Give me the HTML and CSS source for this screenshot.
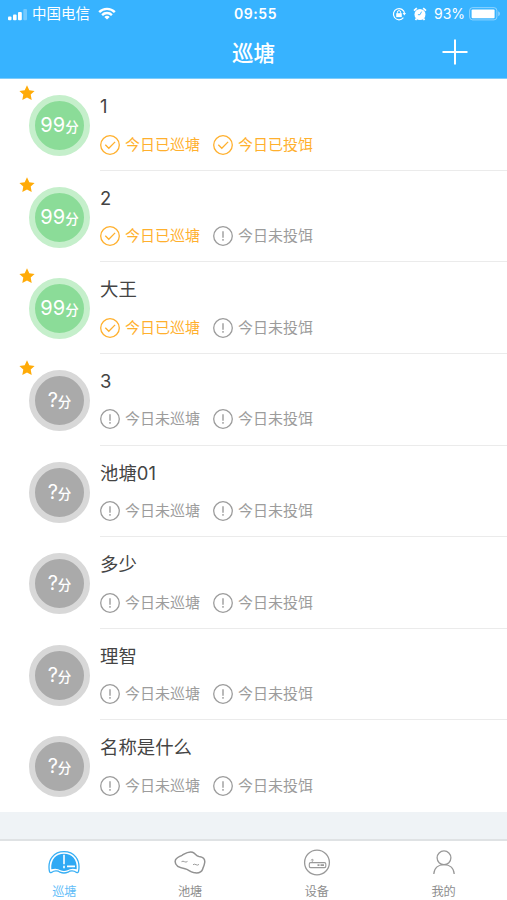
FILE: index.html
```html
<!DOCTYPE html>
<html lang="zh-CN">
<head>
<meta charset="utf-8">
<title>巡塘</title>
<link rel="stylesheet" href="styles.css">
</head>
<body>
<svg class="defs" aria-hidden="true">
  <symbol id="star" viewBox="0 0 16 16"><path d="M8 .3l2.3 4.9 5.3.7-3.9 3.7 1 5.4L8 12.4 3.3 15l1-5.4L.4 5.9l5.3-.7z" fill="#ffab08"/></symbol>
  <symbol id="ok" viewBox="0 0 20 20"><circle cx="10" cy="10" r="9.3"/><path d="M5.3 9.8l3.5 3.5 6.3-6.4"/></symbol>
  <symbol id="warn" viewBox="0 0 20 20"><circle cx="10" cy="10" r="9.3"/><path d="M10 5.2v6.500M10 13v1.700" stroke-width="1.400"/></symbol>
</svg>
<div class="app">
  <header class="header">
    <div class="statusbar">
      <div class="carrier">
        <svg class="signal" viewBox="0 0 20 12" fill="#fff"><rect x="0" y="7.5" width="3.5" height="3.8" rx="1"/><rect x="5" y="5.5" width="3.6" height="5.8" rx="1"/><rect x="10" y="3" width="3.8" height="8.3" rx="1"/><rect x="15.3" y="0" width="3.7" height="11.3" rx="1" opacity=".3"/></svg>
        <span class="carrier-name">中国电信</span>
        <svg class="wifi" viewBox="0 0 18 13" fill="none" stroke="#fff" stroke-width="2.4"><path d="M1.2 5.1a11 11 0 0 1 15.6 0M4.1 8.1a6.9 6.9 0 0 1 9.8 0"/><path d="M9 12.6L6.3 10a3.8 3.8 0 0 1 5.4 0z" fill="#fff" stroke="none"/></svg>
      </div>
      <div class="clock">09:55</div>
      <div class="power">
        <svg class="lock" viewBox="0 0 14 14" fill="none" stroke="#fff"><path d="M11.4 10.7A5.6 5.6 0 1 1 12.6 6.5" stroke-width="1.2"/><path d="M10.6 6h3.4l-1.7 2.4z" fill="#fff" stroke="none"/><rect x="4.2" y="6.2" width="5.6" height="3.9" fill="#fff" stroke="none"/><path d="M5.4 6.5V5.2a1.6 1.6 0 0 1 3.2 0v1.3"/></svg>
        <svg class="alarm" viewBox="0 0 14 14"><circle cx="7" cy="7.5" r="5.5" fill="#fff"/><path d="M1 3.7L3.8 1.2M13 3.7L10.2 1.2M3.6 11.4L2.5 13M10.4 11.4l1.1 1.6" stroke="#fff" stroke-width="1.7"/><path d="M8.6 4.6L7 7.7H4.9" fill="none" stroke="#37b3ff" stroke-width=".9"/></svg>
        <span class="percent">93%</span>
        <svg class="battery" viewBox="0 0 32 14"><rect x=".6" y=".6" width="27.3" height="12.3" rx="3" fill="none" stroke="#fff" opacity=".42"/><rect x="2.6" y="2.4" width="23" height="8.8" rx="1" fill="#fff"/><path d="M29.3 4.3c2 .8 2 4.2 0 5z" fill="#fff" opacity=".5"/></svg>
      </div>
    </div>
    <div class="navbar">
      <h1 class="nav-title">巡塘</h1>
      <svg class="add" viewBox="0 0 26 26" stroke="#fff" stroke-width="2"><path d="M13 .5v25M.5 13h25"/></svg>
    </div>
  </header>

  <main class="list">
    <section class="row">
      <div class="side"><div class="score good"><b>99</b><i>分</i></div><svg class="star"><use href="#star"/></svg></div>
      <div class="info"><h2>1</h2><div class="states"><span class="state done"><svg><use href="#ok"/></svg>今日已巡塘</span><span class="state done"><svg><use href="#ok"/></svg>今日已投饵</span></div></div>
    </section>
    <section class="row">
      <div class="side"><div class="score good"><b>99</b><i>分</i></div><svg class="star"><use href="#star"/></svg></div>
      <div class="info"><h2>2</h2><div class="states"><span class="state done"><svg><use href="#ok"/></svg>今日已巡塘</span><span class="state"><svg><use href="#warn"/></svg>今日未投饵</span></div></div>
    </section>
    <section class="row">
      <div class="side"><div class="score good"><b>99</b><i>分</i></div><svg class="star"><use href="#star"/></svg></div>
      <div class="info"><h2>大王</h2><div class="states"><span class="state done"><svg><use href="#ok"/></svg>今日已巡塘</span><span class="state"><svg><use href="#warn"/></svg>今日未投饵</span></div></div>
    </section>
    <section class="row">
      <div class="side"><div class="score"><b>?</b><i>分</i></div><svg class="star"><use href="#star"/></svg></div>
      <div class="info"><h2>3</h2><div class="states"><span class="state"><svg><use href="#warn"/></svg>今日未巡塘</span><span class="state"><svg><use href="#warn"/></svg>今日未投饵</span></div></div>
    </section>
    <section class="row">
      <div class="side"><div class="score"><b>?</b><i>分</i></div></div>
      <div class="info"><h2>池塘01</h2><div class="states"><span class="state"><svg><use href="#warn"/></svg>今日未巡塘</span><span class="state"><svg><use href="#warn"/></svg>今日未投饵</span></div></div>
    </section>
    <section class="row">
      <div class="side"><div class="score"><b>?</b><i>分</i></div></div>
      <div class="info"><h2>多少</h2><div class="states"><span class="state"><svg><use href="#warn"/></svg>今日未巡塘</span><span class="state"><svg><use href="#warn"/></svg>今日未投饵</span></div></div>
    </section>
    <section class="row">
      <div class="side"><div class="score"><b>?</b><i>分</i></div></div>
      <div class="info"><h2>理智</h2><div class="states"><span class="state"><svg><use href="#warn"/></svg>今日未巡塘</span><span class="state"><svg><use href="#warn"/></svg>今日未投饵</span></div></div>
    </section>
    <section class="row">
      <div class="side"><div class="score"><b>?</b><i>分</i></div></div>
      <div class="info"><h2>名称是什么</h2><div class="states"><span class="state"><svg><use href="#warn"/></svg>今日未巡塘</span><span class="state"><svg><use href="#warn"/></svg>今日未投饵</span></div></div>
    </section>
  </main>

  <nav class="tabs">
    <a class="tab active">
      <svg viewBox="0 0 32 28"><path d="M1.4 22.2C-.8 10 6.500 2.700 16 2.700S32.800 10 30.600 22.200Q30.300 24 28.500 23.400Q26.500 21.900 24 21.900Q21.500 21.900 20 23.200Q18 24 16 24T12 23.200Q10.500 21.900 8 21.900Q5.500 21.900 3.500 23.400Q1.700 24 1.400 22.200z" fill="#fff" stroke="#37aff5" stroke-width="1.3"/><path d="M3.300 20.200C2.600 10.500 8 4.700 16 4.700S29.400 10.500 28.700 20.200Q23 18.800 19.500 21.200Q16 22.600 12.500 21.200Q9 18.800 3.300 20.200z" fill="#2fa9f4"/><path d="M16 5.800v9.500M16 16.800v2.400M19 17.400h8" fill="none" stroke="#fff" stroke-width="1.600"/></svg>
      <span>巡塘</span>
    </a>
    <a class="tab">
      <svg viewBox="0 0 32 28" fill="none" stroke="#929292" stroke-width="1.500"><path d="M1.200 12.200C1.500 8.500 4.500 8.200 8 6.300C12 4 14.500 2 18.500 3.300C22 4.600 21.500 6.800 25 7.400C29 7.800 31.200 10 30.700 13.500C30.300 16.500 29.400 17.800 28.700 20C27.600 23.400 24 24.400 19.500 23.600C15.500 22.600 14.500 20.300 11 19.700C5 18.700 .8 17 1.200 12.200z"/><path d="M7.500 12.700q1.500-1 3 0t3-.3M19 15.700q1.500-1 3 0t3-.3" stroke-width=".9"/></svg>
      <span>池塘</span>
    </a>
    <a class="tab">
      <svg viewBox="0 0 32 28" fill="none" stroke="#999" stroke-width="1.300"><circle cx="16" cy="13.500" r="12.400"/><rect x="8.300" y="13.600" width="16.500" height="5" rx="1.300" stroke-width="1.100"/><path d="M11.300 13.500v-3.300M9.800 11.300q1.500-2 3 0" stroke-width=".8"/><path d="M16.500 16.100h2M19.500 16.100h3.500" stroke-width="1.600"/></svg>
      <span>设备</span>
    </a>
    <a class="tab">
      <svg viewBox="0 0 32 28" fill="none" stroke="#999" stroke-width="1.300"><circle cx="16" cy="8.800" r="6.900"/><path d="M5.800 25C6.200 18.800 10.500 15.600 16 15.600S25.800 18.800 26.200 25"/></svg>
      <span>我的</span>
    </a>
  </nav>
</div>
</body>
</html>
```
FILE: styles.css
```css
* { box-sizing: border-box; }
body {
  margin: 0;
  font-family: Inter, "Noto Sans CJK SC", sans-serif;
  background: #eff3f6;
}
.defs { display: none; }
svg { display: block; flex: none; }
.app {
  width: 507px;
  height: 900px;
  display: flex;
  flex-direction: column;
  overflow: hidden;
}
.header {
  flex: none;
  height: 79px;
  background: #37b3ff;
  border-bottom: 1px solid #7fcdfb;
  color: #fff;
}
.statusbar {
  height: 27px;
  display: grid;
  grid-template-columns: 1fr auto 1fr;
  align-items: center;
  padding: 1px 6px 0 8px;
  line-height: 20px;
}
.carrier, .power { display: flex; align-items: center; }
.power { justify-content: flex-end; }
.signal { width: 20px; height: 12px; margin: 1px 4px 0 0; }
.carrier-name { font-size: 14.500px; }
.wifi { width: 18px; height: 13px; margin-left: 8px; margin-top: -2px; }
.clock { font-size: 14px; font-weight: 600; letter-spacing: .55px; padding-left: 2px; }
.lock { width: 14px; height: 14px; margin: -1px 7px 0 0; }
.alarm { width: 14px; height: 14px; margin: -1px 7px 0 0; }
.percent { font-size: 14px; width: 31px; white-space: nowrap; margin-right: 4px; }
.battery { width: 32px; height: 14px; margin-top: -1px; }
.navbar {
  height: 51px;
  display: grid;
  grid-template-columns: 1fr auto 1fr;
  align-items: center;
}
.nav-title {
  grid-column: 2;
  margin: 0;
  font-size: 21.500px;
  font-weight: 500;
  line-height: 50px;
}
.add { width: 26px; height: 26px; justify-self: end; margin: -2px 39px 0 0; }
.list {
  flex: none;
  height: 733px;
  display: grid;
  grid-template-rows: repeat(8, 1fr);
  background: #fff;
}
.row { display: flex; min-height: 0; }
.side { position: relative; width: 100px; flex: none; padding: 16px 0 0 29px; }
.star { position: absolute; left: 19px; top: 6px; width: 16px; height: 16px; }
.score {
  width: 61px;
  height: 61px;
  border: 6px solid #d8d8d8;
  border-radius: 50%;
  background: #aaa;
  color: #fff;
  display: flex;
  justify-content: center;
  align-items: baseline;
  line-height: 49px;
}
.score.good { border-color: #c5efcb; background: #8bdc98; }
.score b { font-size: 20px; font-weight: 400; }
.score i { font-size: 13.500px; font-style: normal; font-weight: 500; }
.info { flex: 1; border-bottom: 1px solid #ebebeb; padding-top: 13px; }
.row:last-child .info { border-bottom: 0; }
.info h2 {
  margin: 0;
  height: 27px;
  font-size: 18.400px;
  font-weight: 400;
  line-height: 28px;
  color: #444;
}
.states { display: flex; margin: 15.500px 0 0 -.5px; }
.state {
  display: flex;
  align-items: center;
  width: 113px;
  height: 20px;
  font-size: 15px;
  line-height: 20px;
  white-space: nowrap;
  color: #9c9c9c;
}
.state svg {
  width: 20px;
  height: 20px;
  margin-right: 5.500px;
  fill: none;
  stroke: currentColor;
  stroke-width: 1.3;
}
.state.done { color: #ffb02e; }
.tabs {
  flex: none;
  height: 61px;
  margin-top: auto;
  display: grid;
  grid-template-columns: repeat(4, 1fr);
  background: #fff;
  border-top: 2px solid #dfe2e4;
}
.tab {
  display: flex;
  flex-direction: column;
  align-items: center;
  padding-top: 8px;
  font-size: 12.200px;
  line-height: 18px;
  color: #8e8e8e;
}
.tab svg { width: 32px; height: 28px; margin-bottom: 6px; }
.tab.active { color: #62bdf8; padding-left: 2px; }
```
